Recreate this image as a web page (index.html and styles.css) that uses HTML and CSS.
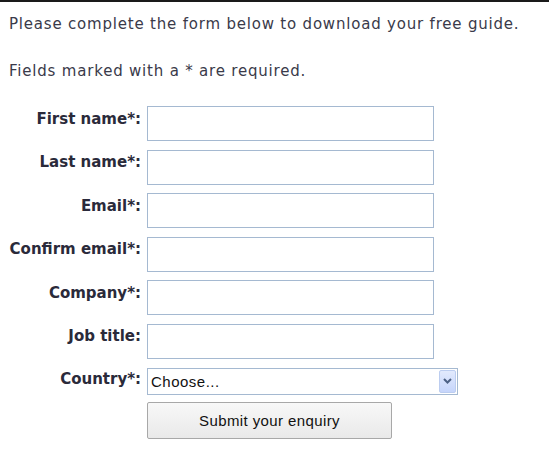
FILE: index.html
```html
<!DOCTYPE html>
<html>
<head>
<meta charset="utf-8">
<link rel="stylesheet" href="styles.css">
</head>
<body>
<div class="page">
  <p class="intro">Please complete the form below to download your free guide.</p>
  <p class="intro intro-2">Fields marked with a * are required.</p>
  <form class="form">
    <label class="lbl" for="f1">First name*:</label>
    <input class="txt" id="f1" type="text">
    <label class="lbl" for="f2">Last name*:</label>
    <input class="txt" id="f2" type="text">
    <label class="lbl" for="f3">Email*:</label>
    <input class="txt" id="f3" type="text">
    <label class="lbl" for="f4">Confirm email*:</label>
    <input class="txt" id="f4" type="text">
    <label class="lbl" for="f5">Company*:</label>
    <input class="txt" id="f5" type="text">
    <label class="lbl" for="f6">Job title:</label>
    <input class="txt" id="f6" type="text">
    <label class="lbl lbl-sel" for="f7">Country*:</label>
    <div class="selwrap">
      <select class="sel" id="f7"><option>Choose...</option></select>
      <span class="arrow"><svg width="9" height="6" viewBox="0 0 9 6"><path d="M1 1 L4.5 4.5 L8 1" fill="none" stroke="#4d6185" stroke-width="2"/></svg></span>
    </div>
    <span></span>
    <button class="btn" type="button">Submit your enquiry</button>
  </form>
</div>
</body>
</html>
```
FILE: styles.css
```css
html, body {
  margin: 0;
  padding: 0;
  background: #fff;
}
.page {
  border-top: 2px solid #1a1a1a;
  padding: 13px 0 0 9px;
  font-family: "DejaVu Sans", Verdana, sans-serif;
  color: #3a3a4a;
}
.intro {
  margin: 0;
  font-size: 15px;
  line-height: 18px;
  letter-spacing: 0.8px;
}
.intro-2 {
  margin-top: 29px;
}
.form {
  display: grid;
  grid-template-columns: 132px auto;
  column-gap: 6px;
  row-gap: 8.6px;
  margin-top: 26px;
  align-items: start;
  justify-items: start;
}
.lbl {
  justify-self: end;
  font-weight: bold;
  font-size: 15px;
  line-height: 18px;
  padding-top: 3.5px;
  color: #2a2a3a;
}
.lbl-sel {
  padding-top: 2.7px;
}
.txt {
  box-sizing: border-box;
  width: 287px;
  height: 35px;
  margin: 0;
  border: 1px solid #a5b9d1;
  background: #fff;
  padding: 0 4px;
}
.selwrap {
  position: relative;
  width: 311px;
  height: 27px;
}
.sel {
  -webkit-appearance: none;
  appearance: none;
  box-sizing: border-box;
  width: 311px;
  height: 27px;
  margin: 0;
  border: 1px solid #a5b9d1;
  background: #fff;
  font-family: "Liberation Sans", Arial, sans-serif;
  font-size: 15px;
  letter-spacing: 0.5px;
  color: #111;
  padding: 0 3px;
  border-radius: 0;
}
.arrow {
  position: absolute;
  right: 2px;
  top: 2px;
  width: 17px;
  height: 23px;
  box-sizing: border-box;
  border: 1px solid #bccdf0;
  border-radius: 2px;
  background: linear-gradient(#e2eafd, #c6d5fb);
  display: flex;
  align-items: center;
  justify-content: center;
  pointer-events: none;
}
.btn {
  box-sizing: border-box;
  width: 245px;
  height: 37px;
  margin: -1px 0 0 0;
  border: 1px solid #a8a8a8;
  border-radius: 2px;
  background: linear-gradient(#f8f8f8, #e9e9e9);
  font-family: "Liberation Sans", Arial, sans-serif;
  font-size: 15px;
  color: #111;
  letter-spacing: 0.4px;
}
```
